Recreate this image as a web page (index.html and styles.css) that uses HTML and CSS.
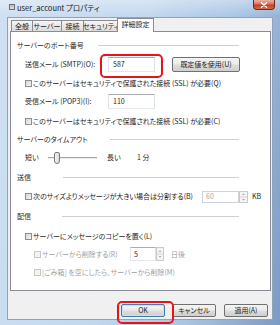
FILE: index.html
```html
<!DOCTYPE html>
<html lang="ja">
<head>
<meta charset="utf-8">
<title>user_account プロパティ</title>
<link rel="stylesheet" href="styles.css">
</head>
<body>
<div class="window">
  <div class="titlebar">
    <svg class="app-icon" width="6" height="6" viewBox="0 0 6 6"><rect x="0.5" y="0.5" width="5" height="5" fill="#d9d9d9" stroke="#6d6d6d"/><rect x="1.5" y="1.5" width="3" height="1" fill="#8aa6c4"/></svg>
    <span class="title">user_account プロパティ</span>
    <div class="close"><svg width="8" height="6" viewBox="0 0 8 6"><path d="M1.5 0.8 L6.5 5.2 M6.5 0.8 L1.5 5.2" stroke="#fff" stroke-width="1.5" stroke-linecap="round"/></svg></div>
  </div>
  <div class="client">
    <div class="tabs">
      <div class="tab t1">全般</div>
      <div class="tab t2">サーバー</div>
      <div class="tab t3">接続</div>
      <div class="tab t4">セキュリティ</div>
      <div class="tab active">詳細設定</div>
    </div>
    <div class="panel">
      <div class="row sec h19"><span class="sec-label w-port">サーバーのポート番号</span><span class="line"></span></div>
      <div class="row ind h19">
        <span class="fld-label">送信メール (SMTP)(O):</span>
        <span class="hl"><span class="input">587</span></span>
        <span class="btn btn-reset">既定値を使用(U)</span>
      </div>
      <div class="row ind-cb h18"><span class="cb"></span><span class="cb-text">このサーバーはセキュリティで保護された接続 (SSL) が必要(Q)</span></div>
      <div class="row ind h19">
        <span class="fld-label">受信メール (POP3)(I):</span>
        <span class="input">110</span>
      </div>
      <div class="row ind-cb h20"><span class="cb"></span><span class="cb-text">このサーバーはセキュリティで保護された接続 (SSL) が必要(C)</span></div>
      <div class="row sec h17"><span class="sec-label w-time">サーバーのタイムアウト</span><span class="line"></span></div>
      <div class="row ind h19">
        <span class="sl-short">短い</span>
        <span class="slider"><span class="track"></span><span class="thumb"></span></span>
        <span class="sl-long">長い</span>
        <span>1 分</span>
      </div>
      <div class="row sec h20"><span class="sec-label w-send">送信</span><span class="line"></span></div>
      <div class="row ind-cb h19">
        <span class="cb"></span><span class="cb-text split-text">次のサイズよりメッセージが大きい場合は分割する(B)</span>
        <span class="input disabled w-kb">60</span>
        <svg class="spin" width="9" height="12" viewBox="0 0 9 12"><rect x="0.5" y="0.5" width="8" height="11" fill="#f4f4f4" stroke="#cacaca"/><line x1="1" y1="6" x2="8" y2="6" stroke="#d8d8d8"/><path d="M3 4 L4.5 2.5 L6 4 Z M3 8 L4.5 9.5 L6 8 Z" fill="#a8a8a8"/></svg>
        <span class="kb">KB</span>
      </div>
      <div class="row sec h21"><span class="sec-label w-recv">配信</span><span class="line"></span></div>
      <div class="row ind-cb h18"><span class="cb"></span><span class="cb-text">サーバーにメッセージのコピーを置く(L)</span></div>
      <div class="row ind-sub h18">
        <span class="cb off"></span><span class="cb-text gray del-text">サーバーから削除する(R)</span>
        <span class="input w-days">5</span>
        <svg class="spin" width="8" height="14" viewBox="0 0 8 14"><rect x="0.5" y="0.5" width="7" height="13" fill="#f4f4f4" stroke="#cacaca"/><line x1="1" y1="7" x2="7" y2="7" stroke="#d8d8d8"/><path d="M2.5 5 L4 3.5 L5.5 5 Z M2.5 9 L4 10.5 L5.5 9 Z" fill="#a8a8a8"/></svg>
        <span class="gray days">日後</span>
      </div>
      <div class="row ind-sub h18"><span class="cb off"></span><span class="cb-text gray">[ごみ箱] を空にしたら、サーバーから削除(M)</span></div>
    </div>
    <div class="buttons">
      <span class="btn btn-ok hl-ok">OK</span>
      <span class="btn">キャンセル</span>
      <span class="btn btn-apply">適用(A)</span>
    </div>
  </div>
</div>
</body>
</html>
```

FILE: styles.css
```css
* { box-sizing: border-box; margin: 0; padding: 0; }
html, body { width: 280px; height: 325px; overflow: hidden; }
body {
  font-family: "Noto Sans CJK JP", "Noto Sans", sans-serif;
  font-size: 7px;
  line-height: 9px;
  color: #1e1e1e;
  font-feature-settings: "palt" 1;
  white-space: nowrap;
}
.window {
  width: 280px;
  height: 325px;
  display: flex;
  flex-direction: column;
  padding: 0 7px 5px 7px;
  background:
    linear-gradient(180deg, rgba(255,255,255,0.35) 0, rgba(255,255,255,0) 16px),
    linear-gradient(100deg, #cfe0f2 0%, #c2d7ee 45%, #a9c4e4 72%, #7b9bc4 100%);
}
.titlebar {
  height: 17px;
  display: flex;
  align-items: flex-start;
  flex: none;
}
.app-icon { margin: 4px 0 0 2px; flex: none; }
.title { margin: 3px 0 0 2px; font-size: 7.5px; line-height: 9px; color: #1a1a1a; }
.close {
  margin-left: auto;
  margin-right: -2px;
  width: 22px;
  height: 10px;
  border: 1px solid #6b2d20;
  border-top: none;
  border-radius: 0 0 4px 4px;
  background: linear-gradient(180deg, #eab2a4 0%, #d9745d 45%, #c5401f 55%, #d86a4c 100%);
  display: flex;
  align-items: center;
  justify-content: center;
}
.client {
  flex: 1;
  border: 1px solid #8fa3bb;
  background: #f0f0f0;
  padding: 0 1px 0 2px;
  display: flex;
  flex-direction: column;
}
.tabs {
  height: 13px;
  display: flex;
  align-items: flex-end;
  padding-left: 1px;
  flex: none;
}
.tab {
  height: 11px;
  border: 1px solid #898c95;
  border-bottom: none;
  background: linear-gradient(180deg, #f6f6f6 0%, #e8e8e8 50%, #dcdcdc 100%);
  display: flex;
  align-items: center;
  justify-content: center;
  font-size: 7px;
  line-height: 9px;
  margin-right: -1px;
}
.t1 { width: 22px; }
.t2 { width: 30px; }
.t3 { width: 23px; }
.t4 { width: 36px; }
.tab.active {
  width: 37px;
  height: 14px;
  margin-bottom: -1px;
  margin-left: -1px;
  background: #fff;
  position: relative;
  z-index: 1;
  padding-bottom: 2px;
}
.panel {
  height: 260px;
  flex: none;
  border: 1px solid #898c95;
  background: #fff;
  padding-top: 4px;
  display: flex;
  flex-direction: column;
}
.row { display: flex; align-items: center; flex: none; }
.h17 { height: 17px; }
.h18 { height: 18px; }
.h19 { height: 19px; }
.h20 { height: 20px; }
.h21 { height: 21px; }
.sec { padding-left: 6px; padding-right: 31px; }
.sec-label { flex: none; color: #2a2a2a; }
.w-port { width: 81px; }
.w-time { width: 93px; }
.w-send { width: 46px; }
.w-recv { width: 45px; }
.line { flex: 1; height: 1px; background: #cfcfcf; }
.ind { padding-left: 14px; }
.ind-cb { padding-left: 14px; }
.ind-sub { padding-left: 23px; }
.fld-label { width: 83px; flex: none; }
.input {
  width: 47px;
  height: 15px;
  border: 1px solid #abadb3;
  border-color: #abadb3 #dbdfe6 #e3e9ef #e2e3ea;
  background: #fff;
  padding-left: 4px;
  display: flex;
  align-items: center;
  flex: none;
}
.hl { position: relative; display: flex; flex: none; }
.hl::after {
  content: "";
  position: absolute;
  left: -8px;
  top: -3px;
  width: 59px;
  height: 20px;
  border: 2px solid #e8141a;
  border-radius: 5px;
}
.btn {
  height: 15px;
  border: 1px solid #707070;
  border-radius: 2px;
  background: linear-gradient(180deg, #f4f4f4 0%, #ebebeb 48%, #dddddd 52%, #cfcfcf 100%);
  display: flex;
  align-items: center;
  justify-content: center;
  flex: none;
  width: 44px;
}
.btn-reset { width: 68px; margin-left: 17px; }
.cb {
  width: 7px;
  height: 7px;
  border: 1px solid #8e8f8f;
  background: linear-gradient(135deg, #d4d6d9 0%, #f4f4f4 100%);
  flex: none;
}
.cb.off { border-color: #c6c6c6; background: #f3f3f3; }
.cb-text { margin-left: 1px; }
.gray { color: #a0a0a0; }
.sl-short { width: 23px; flex: none; }
.slider { position: relative; width: 49px; height: 12px; flex: none; }
.track {
  position: absolute;
  left: 0; right: 0; top: 5px;
  height: 2px;
  border-top: 1px solid #a9a9a9;
  border-bottom: 1px solid #e9e9e9;
}
.thumb {
  position: absolute;
  left: 6px; top: 0;
  width: 6px; height: 12px;
  border: 1px solid #7a7a7a;
  border-radius: 2px 2px 3px 3px;
  background: linear-gradient(90deg, #f5f5f5, #d8d8d8);
}
.sl-long { margin-left: 10px; width: 30px; flex: none; }
.split-text { width: 169px; flex: none; }
.input.disabled { color: #a8a8a8; border-color: #cfd3d9; }
.w-kb { width: 37px; height: 12px; padding-left: 3px; }
.spin { flex: none; display: block; }
.kb { margin-left: 4px; }
.del-text { width: 88px; flex: none; }
.w-days { width: 26px; height: 14px; padding-left: 3px; }
.days { margin-left: 7px; }
.buttons {
  margin-top: 13px;
  height: 13px;
  display: flex;
  justify-content: flex-end;
  gap: 7px;
  padding-right: 3px;
  flex: none;
}
.buttons .btn { height: 13px; }
.btn-ok {
  border-color: #3c7fb1;
  box-shadow: inset 0 0 0 1px #bfe4f8;
  position: relative;
}
.btn-apply { margin-left: 1px; }
.hl-ok::after {
  content: "";
  position: absolute;
  left: -5px;
  top: -4px;
  width: 53px;
  height: 19px;
  border: 2px solid #e8141a;
  border-radius: 5px;
}
```
